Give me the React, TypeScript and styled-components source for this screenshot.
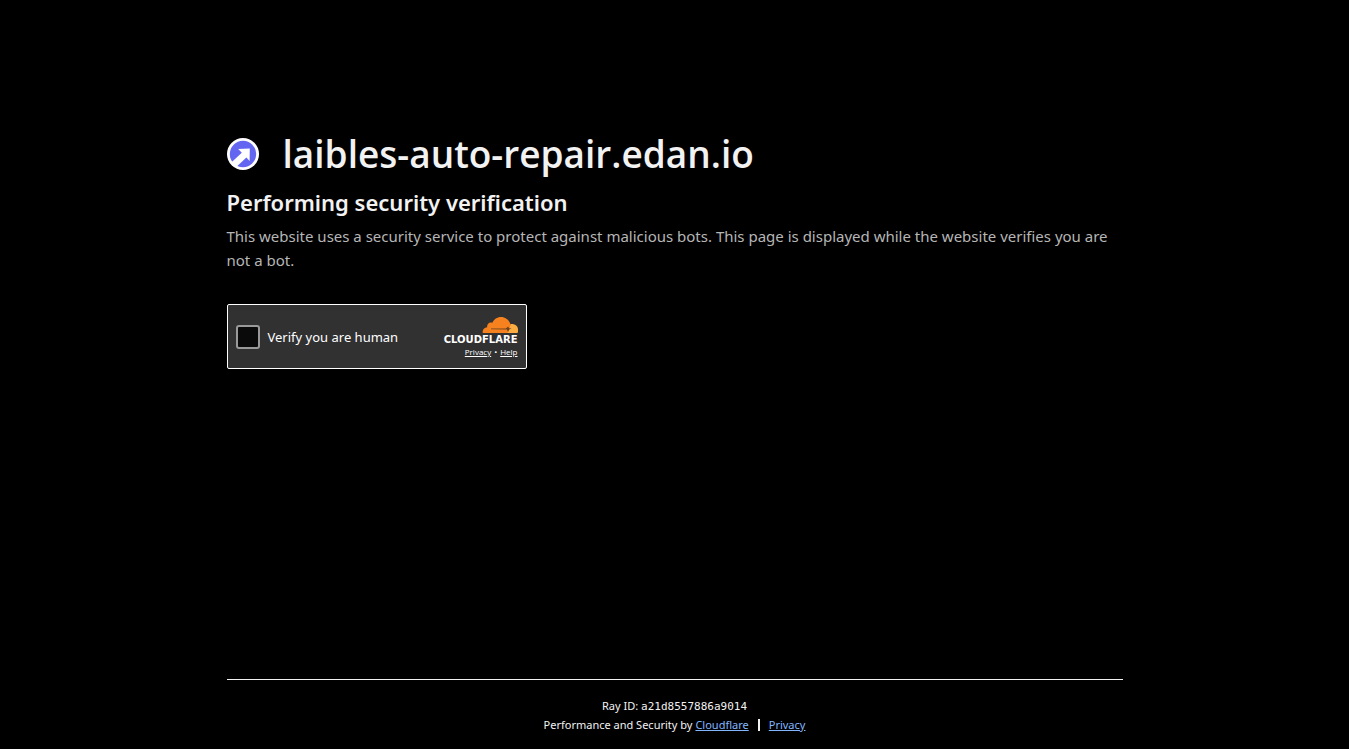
import React from 'react';
import styled, { createGlobalStyle } from 'styled-components';

const sans = '"Noto Sans", "Open Sans", sans-serif';

const GlobalStyle = createGlobalStyle`
  *, *::before, *::after { box-sizing: border-box; }
  body {
    margin: 0;
    background: #000;
    color: #f2f2f2;
    font-family: ${sans};
    font-size: 15px;
    line-height: 24px;
  }
  h1, h2, p { margin: 0; }
`;

const Page = styled.div`
  display: flex;
  flex-direction: column;
  min-height: 100vh;
`;

const Column = styled.div`
  width: 100%;
  max-width: 960px;
  margin: 0 auto;
  padding: 0 32px;
`;

const Main = styled(Column).attrs({ as: 'main' })`
  flex: 1;
  padding-top: 124px;
`;

const SiteHeader = styled.div`
  display: flex;
  align-items: center;
  gap: 24px;
`;

const SiteIcon = styled.svg`
  flex: none;
  width: 32px;
  height: 32px;
`;

const SiteName = styled.h1`
  font-family: "Open Sans", "Noto Sans", sans-serif;
  font-size: 37px;
  font-weight: 600;
  line-height: 60px;
`;

const Heading = styled.h2`
  font-size: 22px;
  font-weight: 600;
  line-height: 36px;
`;

const Message = styled.p`
  margin-top: 4px;
  color: #b6b6b6;
`;

const Widget = styled.section`
  display: flex;
  align-items: center;
  justify-content: space-between;
  width: 300px;
  height: 65px;
  margin-top: 32px;
  padding: 0 8px;
  border: 1px solid #fff;
  border-radius: 2px;
  background: #313131;
  color: #fff;
`;

const CheckLabel = styled.label`
  display: flex;
  align-items: center;
  gap: 8px;
  font-size: 13px;
`;

const Checkbox = styled.input.attrs({ type: 'checkbox' })`
  appearance: none;
  width: 24px;
  height: 24px;
  margin: 0;
  border: 2px solid #999;
  border-radius: 3px;
  background: #0a0a0a;
  cursor: pointer;

  &:checked { background: #f38020; }
`;

const Brand = styled.div`
  display: flex;
  flex-direction: column;
  align-items: flex-end;
`;

const Cloud = styled.svg`
  width: 36px;
  height: 16px;
`;

const Wordmark = styled.div`
  font-family: "DejaVu Sans", sans-serif;
  font-size: 10px;
  font-weight: 700;
  line-height: 13px;
`;

const BrandLinks = styled.div`
  display: flex;
  gap: 3px;
  margin-top: 1px;
  font-family: "Open Sans", sans-serif;
  font-size: 8px;
  line-height: 10px;
`;

const BrandLink = styled.a`
  color: inherit;
`;

const Footer = styled(Column).attrs({ as: 'footer' })`
  font-size: 11px;
  line-height: 19px;
  text-align: center;
`;

const FooterInner = styled.div`
  padding: 16px 0 15px;
  border-top: 1px solid #f2f2f2;
`;

const RayId = styled.code`
  font-family: "DejaVu Sans Mono", monospace;
  font-size: 11px;
  line-height: 16px;
`;

const FooterLinks = styled.div`
  display: flex;
  align-items: center;
  justify-content: center;
`;

const Divider = styled.span`
  width: 2px;
  height: 12px;
  margin: 0 9px;
  background: #f2f2f2;
`;

const FooterLink = styled.a`
  margin-left: ${({ $spaced }: { $spaced?: boolean }) => ($spaced ? '3px' : '0')};
  color: #82b6ff;
`;

export default function App() {
  return (
    <Page>
      <GlobalStyle />
      <Main>
        <SiteHeader>
          <SiteIcon viewBox="0 0 32 32" aria-hidden="true">
            <circle cx="16" cy="16" r="16" fill="#fff" />
            <circle cx="16" cy="16" r="13.2" fill="#6366f1" />
            <path d="M11.2 11 22.8 10.6 22.6 23 19.4 19.4 9 29.2 4 24.8 14.8 14.8Z" fill="#fff" />
          </SiteIcon>
          <SiteName>laibles-auto-repair.edan.io</SiteName>
        </SiteHeader>
        <Heading>Performing security verification</Heading>
        <Message>
          This website uses a security service to protect against malicious bots. This page is
          displayed while the website verifies you are not a bot.
        </Message>
        <Widget>
          <CheckLabel>
            <Checkbox />
            Verify you are human
          </CheckLabel>
          <Brand>
            <Cloud viewBox="0 0 36 16" aria-hidden="true">
              <path
                d="M29 7C33 6.8 36 9 36 12.4V15Q36 16 35 16H24L26 9Z"
                fill="#fbad41"
              />
              <path
                d="M1 16Q0.6 16 0.6 15C0.6 12.4 2.4 10.4 5.2 10.3C4.6 7 7.4 4.4 10.4 5.8C11.8 2.3 15 0 19 0C23.6 0 27.4 3.2 28.6 7.7L27.3 12.6L25.5 16Z"
                fill="#f6821f"
              />
              <path d="M9 11.4H23.8L26.2 9.4L27 11.2L29.6 11.6L27.2 12.6L26 15L25 12.6L9 12.2Z" fill="#6b4220" />
            </Cloud>
            <Wordmark>CLOUDFLARE</Wordmark>
            <BrandLinks>
              <BrandLink href="#privacy">Privacy</BrandLink>
              <span>•</span>
              <BrandLink href="#help">Help</BrandLink>
            </BrandLinks>
          </Brand>
        </Widget>
      </Main>
      <Footer>
        <FooterInner>
          <div>
            Ray ID: <RayId>a21d8557886a9014</RayId>
          </div>
          <FooterLinks>
            <span>Performance and Security by</span>
            <FooterLink href="#cloudflare" $spaced>Cloudflare</FooterLink>
            <Divider />
            <FooterLink href="#footer-privacy">Privacy</FooterLink>
          </FooterLinks>
        </FooterInner>
      </Footer>
    </Page>
  );
}
